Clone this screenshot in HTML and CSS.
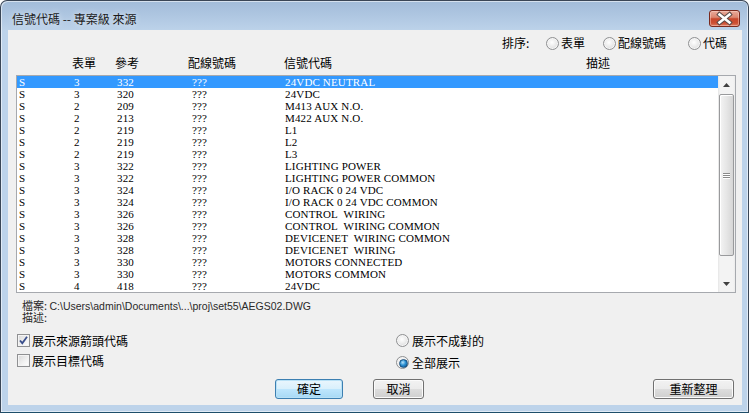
FILE: index.html
```html
<!DOCTYPE html>
<html>
<head>
<meta charset="utf-8">
<title>信號代碼</title>
<link rel="stylesheet" href="styles.css">
</head>
<body>
<div class="window">
  <div class="titlebar">
    <span class="title">信號代碼 -- 專案級 來源</span>
    <span class="close">
      <svg width="29" height="15" viewBox="0 0 29 15">
        <path d="M9.5 3.5 L19.5 11.5 M19.5 3.5 L9.5 11.5" stroke="#5a4b48" stroke-width="4.6" stroke-linecap="square" fill="none"/>
        <path d="M9.5 3.5 L19.5 11.5 M19.5 3.5 L9.5 11.5" stroke="#ffffff" stroke-width="2.6" stroke-linecap="square" fill="none"/>
      </svg>
    </span>
  </div>
  <div class="client">
    <div class="sort-row">
      <span class="sort-label">排序:</span>
      <span class="opt opt1"><span class="radio"></span>表單</span>
      <span class="opt opt2"><span class="radio"></span>配線號碼</span>
      <span class="opt"><span class="radio"></span>代碼</span>
    </div>
    <div class="header">
      <span></span><span>表單</span><span>參考</span><span>配線號碼</span><span>信號代碼</span><span>描述</span>
    </div>
    <div class="listbox">
      <div class="rows">
        <div class="row sel"><span>S</span><span>3</span><span>332</span><span>???</span><span>24VDC NEUTRAL</span></div>
        <div class="row"><span>S</span><span>3</span><span>320</span><span>???</span><span>24VDC</span></div>
        <div class="row"><span>S</span><span>2</span><span>209</span><span>???</span><span>M413 AUX N.O.</span></div>
        <div class="row"><span>S</span><span>2</span><span>213</span><span>???</span><span>M422 AUX N.O.</span></div>
        <div class="row"><span>S</span><span>2</span><span>219</span><span>???</span><span>L1</span></div>
        <div class="row"><span>S</span><span>2</span><span>219</span><span>???</span><span>L2</span></div>
        <div class="row"><span>S</span><span>2</span><span>219</span><span>???</span><span>L3</span></div>
        <div class="row"><span>S</span><span>3</span><span>322</span><span>???</span><span>LIGHTING POWER</span></div>
        <div class="row"><span>S</span><span>3</span><span>322</span><span>???</span><span>LIGHTING POWER COMMON</span></div>
        <div class="row"><span>S</span><span>3</span><span>324</span><span>???</span><span>I/O RACK 0 24 VDC</span></div>
        <div class="row"><span>S</span><span>3</span><span>324</span><span>???</span><span>I/O RACK 0 24 VDC COMMON</span></div>
        <div class="row"><span>S</span><span>3</span><span>326</span><span>???</span><span>CONTROL&nbsp; WIRING</span></div>
        <div class="row"><span>S</span><span>3</span><span>326</span><span>???</span><span>CONTROL&nbsp; WIRING COMMON</span></div>
        <div class="row"><span>S</span><span>3</span><span>328</span><span>???</span><span>DEVICENET&nbsp; WIRING COMMON</span></div>
        <div class="row"><span>S</span><span>3</span><span>328</span><span>???</span><span>DEVICENET&nbsp; WIRING</span></div>
        <div class="row"><span>S</span><span>3</span><span>330</span><span>???</span><span>MOTORS CONNECTED</span></div>
        <div class="row"><span>S</span><span>3</span><span>330</span><span>???</span><span>MOTORS COMMON</span></div>
        <div class="row"><span>S</span><span>4</span><span>418</span><span>???</span><span>24VDC</span></div>
      </div>
      <div class="scrollbar">
        <div class="sb-btn">
          <svg width="7" height="4" viewBox="0 0 7 4"><polygon points="3.5,0 7,4 0,4" fill="#404040"/></svg>
        </div>
        <div class="track">
          <div class="thumb">
            <span class="grip"></span><span class="grip"></span><span class="grip"></span>
          </div>
        </div>
        <div class="sb-btn">
          <svg width="7" height="4" viewBox="0 0 7 4"><polygon points="0,0 7,0 3.5,4" fill="#404040"/></svg>
        </div>
      </div>
    </div>
    <div class="info">
      <div class="info-line">檔案: <span class="path">C:\Users\admin\Documents\...\proj\set55\AEGS02.DWG</span></div>
      <div class="info-line">描述:</div>
    </div>
    <div class="options">
      <div class="checks">
        <div class="chk">
          <span class="box">
            <svg width="11" height="11" viewBox="0 0 11 11"><path d="M2 5.5 L4.3 8.2 L9 1.8" stroke="#3a4f8c" stroke-width="1.8" fill="none"/></svg>
          </span>展示來源箭頭代碼
        </div>
        <div class="chk"><span class="box"></span>展示目標代碼</div>
      </div>
      <div class="radios">
        <div class="ropt"><span class="radio"></span>展示不成對的</div>
        <div class="ropt"><span class="radio on"></span>全部展示</div>
      </div>
    </div>
    <div class="buttons">
      <span class="btn default ok">確定</span>
      <span class="btn cancel">取消</span>
      <span class="btn refresh">重新整理</span>
    </div>
  </div>
</div>
</body>
</html>
```
FILE: styles.css
```css
* { box-sizing: border-box; }
html, body { margin: 0; padding: 0; }
body {
  width: 750px;
  height: 413px;
  overflow: hidden;
  background: #ffffff;
  font-family: "Noto Sans CJK TC", "Noto Sans", sans-serif;
  font-size: 12px;
  color: #000;
}
.window {
  width: 749px;
  height: 413px;
  border: 1px solid #3a4656;
  border-bottom-color: #1d4e6a;
  border-radius: 7px 7px 0 0;
  background: linear-gradient(to bottom, #a2bcd9 0px, #aec6e1 14px, #bdd3ea 30px, #bdd3ea 100%);
  box-shadow: inset 1px 1px 0 rgba(255,255,255,0.55), inset -1px -1px 0 rgba(255,255,255,0.55);
  display: flex;
  flex-direction: column;
  padding: 0 6px 7px 7px;
}
.titlebar {
  height: 29px;
  display: flex;
  align-items: flex-start;
  padding-top: 9px;
}
.title {
  margin-left: 4px;
  height: 17px;
  line-height: 17px;
  color: #1b1b1b;
  font-size: 12px;
  text-shadow: 0 0 6px rgba(255,255,255,0.7);
}
.close {
  margin-left: auto;
  margin-right: 2px;
  width: 31px;
  height: 17px;
  border: 1px solid #7a2a1e;
  border-radius: 3px;
  background: linear-gradient(to bottom, #e9ab9b 0%, #dc8670 42%, #c8472c 52%, #cc4e32 80%, #de7d62 100%);
  box-shadow: inset 0 0 0 1px rgba(255,220,210,0.45);
  display: flex;
  align-items: center;
  justify-content: center;
}
.close svg { display: block; }
.client {
  flex: 1;
  background: #f0f0f0;
  display: flex;
  flex-direction: column;
  padding: 0 6px 0 8px;
}
.sort-row {
  margin-top: 6px;
  height: 14px;
  display: flex;
  align-items: center;
  padding-left: 486px;
  line-height: 14px;
}
.sort-label { width: 44px; }
.opt { display: flex; align-items: center; gap: 2px; }
.opt1 { width: 57px; }
.opt2 { width: 85px; }
.radio {
  width: 13px;
  height: 13px;
  border-radius: 50%;
  border: 1px solid #8f9092;
  background: radial-gradient(circle at 45% 40%, #ffffff 0%, #ececec 45%, #cfd0d2 100%);
  box-shadow: inset 0 0 0 1px #f6f6f6;
  display: inline-block;
  flex: none;
  position: relative;
}
.radio.on::after {
  content: "";
  position: absolute;
  left: 2px;
  top: 2px;
  width: 7px;
  height: 7px;
  border-radius: 50%;
  background: radial-gradient(circle at 40% 35%, #b7e3fb 0%, #2a8fd1 45%, #0f4d8c 100%);
  border: 1px solid #1a4f7c;
}
.header {
  margin-top: 6px;
  height: 14px;
  line-height: 14px;
  display: grid;
  grid-template-columns: 56px 43px 73px 96px 302px auto;
}
.listbox {
  margin-top: 5px;
  height: 218px;
  border: 1px solid #a6a9ae;
  background: #ffffff;
  display: flex;
}
.rows { flex: 1; }
.row {
  height: 12px;
  line-height: 12px;
  display: grid;
  grid-template-columns: 55px 43px 75px 93px auto;
  padding-left: 2px;
  font-family: "Liberation Serif", "DejaVu Serif", serif;
  font-size: 11px;
  letter-spacing: 0.15px;
  white-space: nowrap;
  color: #000;
}
.row.sel { background: #3399ff; color: #ffffff; }
.scrollbar {
  width: 17px;
  display: flex;
  flex-direction: column;
  background: linear-gradient(to right, #e6e6e6 0px, #f3f3f3 2px, #f3f3f3 15px, #ececec 17px);
}
.sb-btn {
  height: 17px;
  display: flex;
  align-items: center;
  justify-content: center;
}
.sb-btn svg { display: block; }
.track {
  flex: 1;
  padding: 1px 0 19px 1px;
  display: flex;
}
.thumb {
  flex: 1;
  margin-right: 1px;
  border: 1px solid #999a9c;
  border-radius: 2px;
  background: linear-gradient(to right, #f4f4f4 0%, #e6e6e6 50%, #d6d6d6 100%);
  box-shadow: inset 1px 1px 0 #ffffff;
  display: flex;
  flex-direction: column;
  align-items: center;
  justify-content: center;
  gap: 1px;
}
.grip {
  width: 7px;
  height: 1px;
  background: #8a8a8a;
  box-shadow: 0 1px 0 #ffffff;
}
.info {
  margin-top: 6px;
  padding-left: 6px;
  color: #2a2a2a;
  font-size: 11px;
}
.info-line {
  height: 12px;
  line-height: 12px;
  white-space: nowrap;
}
.path {
  font-family: "Liberation Sans", Arial, sans-serif;
  font-size: 10.5px;
}
.options {
  margin-top: 11px;
  height: 35px;
  display: flex;
}
.checks {
  width: 380px;
  padding-left: 1px;
  display: flex;
  flex-direction: column;
  gap: 7px;
}
.chk {
  height: 13px;
  line-height: 13px;
  display: flex;
  align-items: center;
  gap: 2px;
}
.box {
  width: 13px;
  height: 13px;
  border: 1px solid #8f9092;
  background: linear-gradient(135deg, #d8d8d8 0%, #f2f2f2 60%, #ffffff 100%);
  box-shadow: inset 0 0 0 1px #f4f4f4;
  display: flex;
  align-items: center;
  justify-content: center;
  flex: none;
}
.box svg { display: block; }
.radios {
  display: flex;
  flex-direction: column;
  gap: 9px;
}
.ropt {
  height: 13px;
  line-height: 13px;
  display: flex;
  align-items: center;
  gap: 3px;
}
.buttons {
  margin-top: 10px;
  height: 20px;
  display: flex;
}
.btn {
  height: 20px;
  line-height: 18px;
  text-align: center;
  border: 1px solid #707070;
  border-radius: 3px;
  background: linear-gradient(to bottom, #f2f2f2 0%, #ebebeb 50%, #dddddd 51%, #cfcfcf 100%);
  box-shadow: inset 0 0 0 1px #fbfbfb;
  color: #000;
}
.btn.default {
  border-color: #3c7fb1;
  background: linear-gradient(to bottom, #eaf6fd 0%, #d9f0fc 50%, #bee6fd 51%, #a7d9f5 100%);
  box-shadow: inset 0 0 0 1px #b9e1f6;
}
.ok { margin-left: 259px; width: 68px; }
.cancel { margin-left: 30px; width: 51px; }
.refresh { margin-left: auto; margin-right: 2px; width: 81px; }
```
